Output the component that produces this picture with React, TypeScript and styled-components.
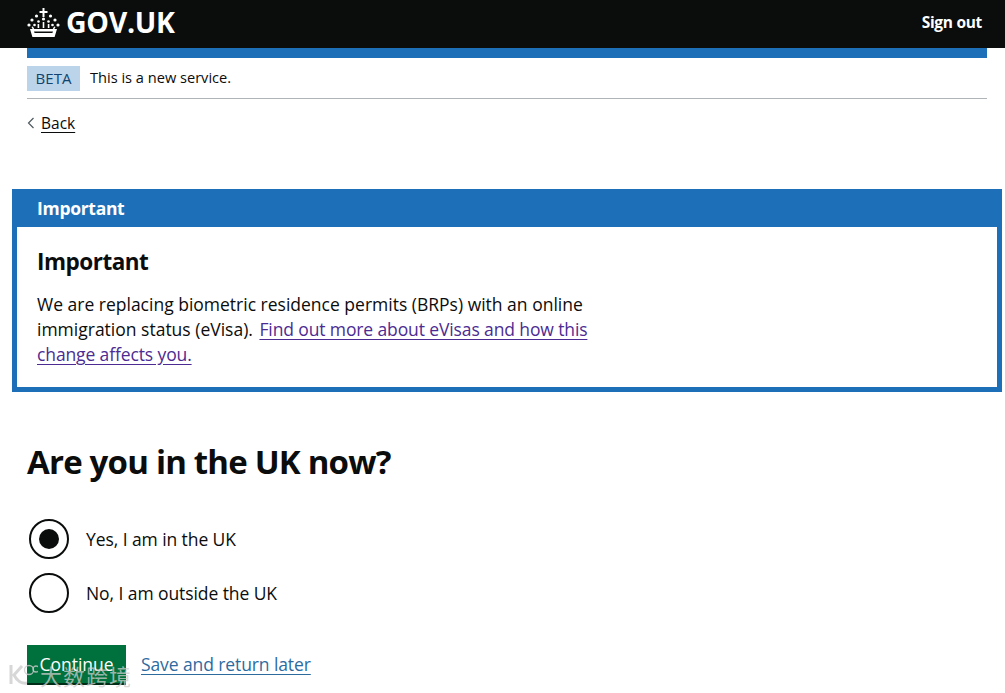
import React from "react";
import styled, { createGlobalStyle } from "styled-components";

const Global = createGlobalStyle`
  html, body { margin: 0; padding: 0; background: #fff; overflow: hidden; }
  body { font-family: "Open Sans", "Noto Sans CJK SC", sans-serif; color: #0b0c0c; }
`;
const Page = styled.div`
  position: relative;
  width: 1005px;
  height: 693px;
  overflow: hidden;
`;
const Header = styled.header`
  height: 48px;
  background: #0b0c0c;
  display: flex;
  align-items: center;
  justify-content: space-between;
  padding: 0 23px 0 27px;
`;
const Logo = styled.div`
  display: flex;
  align-items: center;
  gap: 6px;
  color: #fff;
  font: 700 28.5px/1 "Open Sans", sans-serif;
  letter-spacing: -0.3px;
  margin-top: -4px;
`;
const SignOut = styled.a`
  color: #fff;
  font-size: 15.5px;
  font-weight: 700;
  letter-spacing: -0.3px;
  margin-top: -5px;
`;
const Wrap = styled.div`
  margin: 0 18px 0 27px;
`;
const BlueBar = styled.div`
  height: 10px;
  background: #1d70b8;
`;
const Phase = styled.div`
  height: 40px;
  display: flex;
  align-items: center;
  gap: 10px;
  border-bottom: 1px solid #b1b4b6;
`;
const Tag = styled.span`
  width: 53px;
  height: 25px;
  display: flex;
  align-items: center;
  justify-content: center;
  background: #bbd4ea;
  color: #12436d;
  font-size: 15px;
`;
const PhaseText = styled.span`
  font-size: 14.6px;
  margin-top: -3px;
`;
const Back = styled.div`
  display: flex;
  align-items: center;
  gap: 6px;
  margin-top: 14px;
  height: 20px;
  font-size: 15.5px;
`;
const BackLink = styled.a`
  color: #0b0c0c;
  text-decoration: underline;
  text-underline-offset: 3px;
`;
const Banner = styled.section`
  margin: 56px 3px 0 12px;
  height: 203px;
  box-sizing: border-box;
  border: 5px solid #1d70b8;
  border-top: 0;
`;
const BannerTitle = styled.div`
  height: 38px;
  margin: 0 -5px;
  padding-left: 25px;
  background: #1d70b8;
  color: #fff;
  font-size: 17.5px;
  font-weight: 700;
  line-height: 38px;
  letter-spacing: -0.3px;
`;
const BannerBody = styled.div`
  padding: 20px 20px 0;
`;
const BannerHeading = styled.h3`
  margin: 0 0 15px;
  font-size: 22.5px;
  line-height: 30px;
  font-weight: 700;
  letter-spacing: -0.5px;
`;
const BannerText = styled.p`
  margin: 0;
  width: 560px;
  font-size: 17.5px;
  line-height: 25px;
`;
const VisitedLink = styled.a`
  color: #4c2c92;
  margin-left: 2px;
  letter-spacing: -0.12px;
  text-decoration: underline;
  text-underline-offset: 3px;
`;
const Main = styled.main`
  margin: 48px 0 0 27px;
`;
const Heading = styled.h1`
  margin: 0 0 35px;
  font-size: 33px;
  line-height: 44px;
  font-weight: 700;
  letter-spacing: -0.8px;
`;
const Radios = styled.div`
  display: flex;
  flex-direction: column;
  gap: 14px;
  margin-left: 2px;
`;
const RadioRow = styled.label`
  display: flex;
  align-items: center;
  gap: 17px;
  height: 40px;
  font-size: 17.5px;
  letter-spacing: -0.08px;
`;
const Circle = styled.span<{ $on?: boolean }>`
  width: 40px;
  height: 40px;
  box-sizing: border-box;
  border: 2.5px solid #0b0c0c;
  border-radius: 50%;
  display: flex;
  align-items: center;
  justify-content: center;
  &::after {
    content: "";
    display: ${(p) => (p.$on ? "block" : "none")};
    width: 20px;
    height: 20px;
    border-radius: 50%;
    background: #0b0c0c;
  }
`;
const Actions = styled.div`
  display: flex;
  align-items: flex-start;
  gap: 15px;
  margin-top: 32px;
`;
const Button = styled.button`
  width: 99px;
  height: 40px;
  border: 0;
  border-bottom: 2px solid #002d18;
  background: #00703c;
  color: #fff;
  font: 400 17.5px "Open Sans", sans-serif;
  padding: 0;
`;
const SaveLink = styled.a`
  color: #2d6b9f;
  font-size: 17.5px;
  line-height: 38px;
  letter-spacing: -0.1px;
  text-decoration: underline;
  text-underline-offset: 3px;
`;
const Watermark = styled.div`
  position: absolute;
  left: 8px;
  bottom: 5px;
  display: flex;
  align-items: center;
  gap: 2px;
  color: rgba(205, 205, 205, 0.75);
  font: 400 22px/1 "Noto Sans CJK SC", sans-serif;
  letter-spacing: 1px;
`;

const Crown = () => (
  <svg width="33" height="31" viewBox="0 0 33 31" fill="#fff" aria-hidden="true">
    <path d="M15.5 1h2v3h3v2h-3v4h-2V6h-3V4h3z" />
    <circle cx="16.5" cy="12" r="1.6" />
    <circle cx="9.5" cy="9" r="1.6" />
    <circle cx="23.5" cy="9" r="1.6" />
    <circle cx="5" cy="13" r="1.6" />
    <circle cx="28" cy="13" r="1.6" />
    <circle cx="2" cy="18" r="1.6" />
    <circle cx="31" cy="18" r="1.6" />
    <circle cx="11.5" cy="14.5" r="1.3" />
    <circle cx="21.5" cy="14.5" r="1.3" />
    <circle cx="7.5" cy="18" r="1.3" />
    <circle cx="25.5" cy="18" r="1.3" />
    <path d="M15.7 15h1.6v6h-1.6zM10.6 17h1.6v4h-1.6zM20.8 17h1.6v4h-1.6zM4.5 20l1.4-.6 1.6 3h-1.6zM28.5 20l-1.4-.6-1.6 3h1.6z" />
    <path d="M3 22h27l-2.4 8H5.4zM7 24.4l.6 1.6h17.8l.6-1.6z" />
  </svg>
);

const Chevron = () => (
  <svg width="8" height="12" viewBox="0 0 8 12" fill="none" stroke="#505a5f" strokeWidth="1.2" aria-hidden="true">
    <path d="M6.5 1 1.5 6l5 5" />
  </svg>
);

const Logomark = () => (
  <svg width="30" height="26" viewBox="0 0 30 26" fill="none" stroke="rgba(205,205,205,.8)" strokeWidth="3" aria-hidden="true">
    <path d="M3 3v19M14 4 6 13c3 6 8 9 13 8" />
    <circle cx="21" cy="8" r="4.5" strokeWidth="1.3" />
    <circle cx="28" cy="7" r="3" strokeWidth="1.3" />
  </svg>
);

export default function App() {
  return (
    <Page>
      <Global />
      <Header>
        <Logo>
          <Crown />
          GOV.UK
        </Logo>
        <SignOut>Sign out</SignOut>
      </Header>
      <Wrap>
        <BlueBar />
        <Phase>
          <Tag>BETA</Tag>
          <PhaseText>This is a new service.</PhaseText>
        </Phase>
        <Back>
          <Chevron />
          <BackLink>Back</BackLink>
        </Back>
      </Wrap>
      <Banner>
        <BannerTitle>Important</BannerTitle>
        <BannerBody>
          <BannerHeading>Important</BannerHeading>
          <BannerText>
            We are replacing biometric residence permits (BRPs) with an online immigration status (eVisa).{" "}
            <VisitedLink>Find out more about eVisas and how this change affects you.</VisitedLink>
          </BannerText>
        </BannerBody>
      </Banner>
      <Main>
        <Heading>Are you in the UK now?</Heading>
        <Radios>
          <RadioRow>
            <Circle $on />
            Yes, I am in the UK
          </RadioRow>
          <RadioRow>
            <Circle />
            No, I am outside the UK
          </RadioRow>
        </Radios>
        <Actions>
          <Button>Continue</Button>
          <SaveLink>Save and return later</SaveLink>
        </Actions>
      </Main>
      <Watermark>
        <Logomark />
        <span>大数跨境</span>
      </Watermark>
    </Page>
  );
}
